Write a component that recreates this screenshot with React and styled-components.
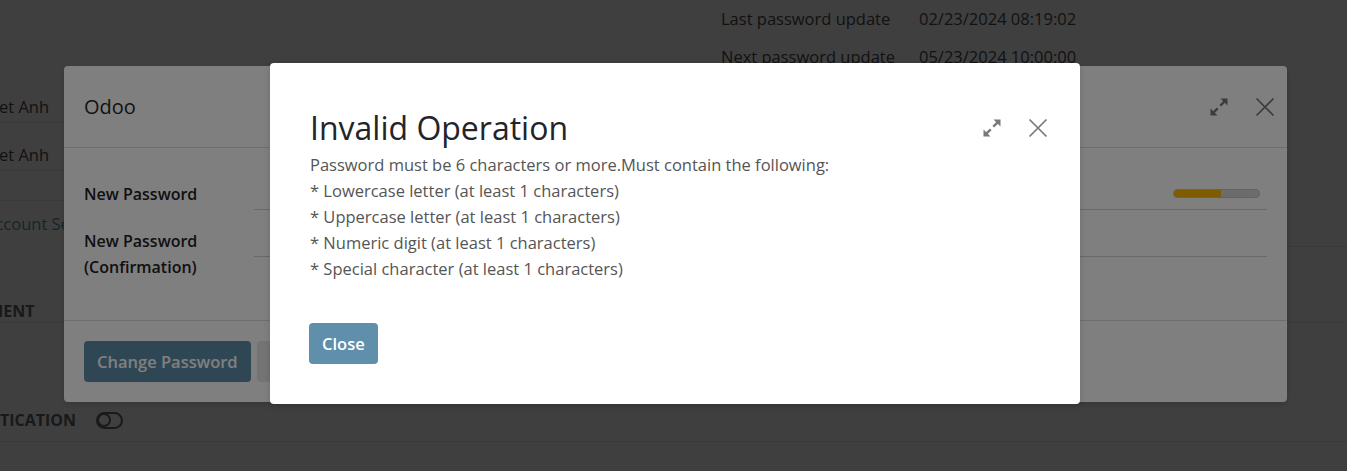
import React from "react";
import styled, { createGlobalStyle } from "styled-components";

const GlobalStyle = createGlobalStyle`
  html, body {
    margin: 0;
    padding: 0;
    height: 100%;
  }
  body {
    font-family: "Open Sans", "Noto Sans", sans-serif;
    font-size: 16.5px;
    overflow: hidden;
  }
  #root {
    height: 100%;
  }
`;

const ExpandIcon = () => (
  <svg width="20" height="20" viewBox="0 0 20 20" fill="currentColor">
    <path d="M11.5 1.5h7v7z" />
    <path d="M15.5 4.5l-4.2 4.2" stroke="currentColor" strokeWidth="2.4" />
    <path d="M1.5 11.5v7h7z" />
    <path d="M4.5 15.5l4.2-4.2" stroke="currentColor" strokeWidth="2.4" />
  </svg>
);

const CloseIcon = () => (
  <svg width="20" height="20" viewBox="0 0 20 20" fill="none">
    <path d="M1.5 1.5l17 17M18.5 1.5l-17 17" stroke="currentColor" strokeWidth="1.7" />
  </svg>
);

const HeaderTools = () => (
  <Tools>
    <IconButton aria-label="Maximize">
      <ExpandIcon />
    </IconButton>
    <IconButton aria-label="Close">
      <CloseIcon />
    </IconButton>
  </Tools>
);

const App = () => {
  const message = [
    "Password must be 6 characters or more.Must contain the following:",
    "* Lowercase letter (at least 1 characters)",
    "* Uppercase letter (at least 1 characters)",
    "* Numeric digit (at least 1 characters)",
    "* Special character (at least 1 characters)",
  ];

  return (
    <>
      <GlobalStyle />
      <Screen>
        <Page>
          <Sheet>
            <TopGrid>
              <Values>
                <FieldRow>Viet Anh</FieldRow>
                <FieldRow>Viet Anh</FieldRow>
                <Spacer />
                <LinkRow>Account Security</LinkRow>
              </Values>
              <InfoList>
                <InfoRow>
                  <span>Last password update</span>
                  <span>02/23/2024 08:19:02</span>
                </InfoRow>
                <InfoRow>
                  <span>Next password update</span>
                  <span>05/23/2024 10:00:00</span>
                </InfoRow>
              </InfoList>
            </TopGrid>
            <SectionHead $top={53} $bottom={0}>
              Password Management
            </SectionHead>
            <SectionHead $top={86} $bottom={10}>
              Two-factor Authentication
              <Toggle>
                <Knob />
              </Toggle>
            </SectionHead>
          </Sheet>
        </Page>

        <Backdrop />
        <ModalLayer $top={66} $left={64}>
          <Dialog $width={1223}>
            <WizardHeader>
              <WizardTitle>Odoo</WizardTitle>
              <HeaderTools />
            </WizardHeader>
            <WizardBody>
              <FormRow>
                <FieldLabel>New Password</FieldLabel>
                <InputLine>
                  <Meter>
                    <MeterFill style={{ width: "55%" }} />
                  </Meter>
                </InputLine>
              </FormRow>
              <FormRow>
                <FieldLabel>New Password (Confirmation)</FieldLabel>
                <InputLine />
              </FormRow>
            </WizardBody>
            <WizardFooter>
              <Button $variant="primary">Change Password</Button>
              <Button $variant="secondary">Discard</Button>
            </WizardFooter>
          </Dialog>
        </ModalLayer>

        <Backdrop />
        <ModalLayer $top={63} $left={270}>
          <Dialog $width={810}>
            <AlertHeader>
              <AlertTitle>Invalid Operation</AlertTitle>
              <HeaderTools />
            </AlertHeader>
            <AlertBody>
              {message.map((line) => (
                <p key={line}>{line}</p>
              ))}
            </AlertBody>
            <AlertFooter>
              <Button $variant="primary">Close</Button>
            </AlertFooter>
          </Dialog>
        </ModalLayer>
      </Screen>
    </>
  );
};

const Screen = styled.div`
  position: relative;
  width: 100vw;
  height: 100vh;
  overflow: hidden;
`;

/* page behind the dialogs, scrolled a little to the right */
const Page = styled.div`
  height: 100%;
  background: #fff;
  color: #4a4a4a;
`;

const Sheet = styled.div`
  margin-left: -176px;
`;

const TopGrid = styled.div`
  display: grid;
  grid-template-columns: 897px 1fr;
`;

const Values = styled.div`
  padding: 75px 0 0 161px;
`;

const FieldRow = styled.div`
  padding: 20px 0 3px;
  line-height: 24px;
  border-bottom: 1px solid #e4e4e4;
`;

const Spacer = styled.div`
  height: 29px;
  border-bottom: 1px solid #e4e4e4;
`;

const LinkRow = styled.div`
  padding-top: 11px;
  line-height: 24px;
  color: #5f8fab;
`;

const InfoList = styled.div`
  display: flex;
  flex-direction: column;
  gap: 14px;
  box-sizing: border-box;
  min-height: 247px;
  padding-top: 7px;
  border-bottom: 1px solid #e4e4e4;
`;

const InfoRow = styled.div`
  display: grid;
  grid-template-columns: 198px 1fr;
  line-height: 24px;
`;

const SectionHead = styled.div`
  display: flex;
  align-items: center;
  gap: 20px;
  margin-top: ${(props) => props.$top}px;
  padding-bottom: ${(props) => props.$bottom}px;
  line-height: 22px;
  font-size: 16px;
  font-weight: 700;
  text-transform: uppercase;
  color: #666;
  border-bottom: 1px solid #e4e4e4;
`;

const Toggle = styled.span`
  display: inline-flex;
  align-items: center;
  box-sizing: border-box;
  width: 27px;
  height: 17px;
  border: 2px solid #666;
  border-radius: 9px;
`;

const Knob = styled.span`
  box-sizing: border-box;
  width: 14px;
  height: 14px;
  margin-left: -1px;
  border: 2px solid #666;
  border-radius: 50%;
`;

/* dialogs */
const Backdrop = styled.div`
  position: absolute;
  inset: 0;
  background: rgba(0, 0, 0, 0.5);
`;

const ModalLayer = styled.div`
  position: absolute;
  inset: 0;
  display: flex;
  align-items: flex-start;
  padding: ${(props) => `${props.$top}px 0 0 ${props.$left}px`};
`;

const Dialog = styled.div`
  width: ${(props) => props.$width}px;
  background: #fff;
  border-radius: 4px;
  box-shadow: 0 2px 6px rgba(0, 0, 0, 0.15);
`;

const Tools = styled.div`
  display: flex;
  align-items: center;
  gap: 26px;
  margin-left: auto;
`;

const IconButton = styled.button`
  display: flex;
  width: 20px;
  height: 20px;
  padding: 0;
  border: none;
  background: transparent;
  color: #787878;
  cursor: pointer;
`;

const WizardHeader = styled.div`
  display: flex;
  align-items: center;
  height: 81px;
  padding: 0 12px 0 20px;
  border-bottom: 1px solid #dcdcdc;
`;

const WizardTitle = styled.h4`
  margin: 0;
  font-size: 20px;
  font-weight: 500;
  color: #262626;
`;

const WizardBody = styled.div`
  display: flex;
  flex-direction: column;
  gap: 15px;
  padding: 30px 20px 40px;
`;

const FormRow = styled.div`
  display: grid;
  grid-template-columns: 170px 1fr;
  align-items: start;
`;

const FieldLabel = styled.label`
  padding-top: 3px;
  line-height: 26px;
  font-size: 16px;
  font-weight: 600;
  color: #222;
`;

const InputLine = styled.div`
  display: flex;
  align-items: center;
  justify-content: flex-end;
  height: 31px;
  padding-right: 7px;
  border-bottom: 1px solid #d2d2d2;
`;

const Meter = styled.div`
  box-sizing: border-box;
  width: 87px;
  height: 9px;
  border: 1px solid #c4c4c4;
  border-radius: 5px;
  background: #d9d9d9;
  overflow: hidden;
`;

const MeterFill = styled.div`
  height: 100%;
  background: #ffb800;
`;

const WizardFooter = styled.div`
  display: flex;
  gap: 6px;
  padding: 20px;
  border-top: 1px solid #dcdcdc;
`;

const Button = styled.button`
  height: 41px;
  padding: 0 13px;
  border: none;
  border-radius: 4px;
  font-family: inherit;
  font-size: 16.5px;
  font-weight: 600;
  background: ${(props) => (props.$variant === "primary" ? "#5f8fab" : "#e8e8ea")};
  color: ${(props) => (props.$variant === "primary" ? "#fff" : "#222")};
  cursor: pointer;
`;

const AlertHeader = styled.div`
  display: flex;
  align-items: center;
  padding: 46px 32px 0 40px;
`;

const AlertTitle = styled.h4`
  margin: 0;
  line-height: 38px;
  font-size: 32px;
  font-weight: 400;
  color: #212529;
`;

const AlertBody = styled.div`
  margin-top: 5px;
  padding: 0 40px;
  color: #555;

  p {
    margin: 0;
    line-height: 26px;
  }
`;

const AlertFooter = styled.div`
  display: flex;
  padding: 41px 40px 40px 39px;
`;

export default App;
